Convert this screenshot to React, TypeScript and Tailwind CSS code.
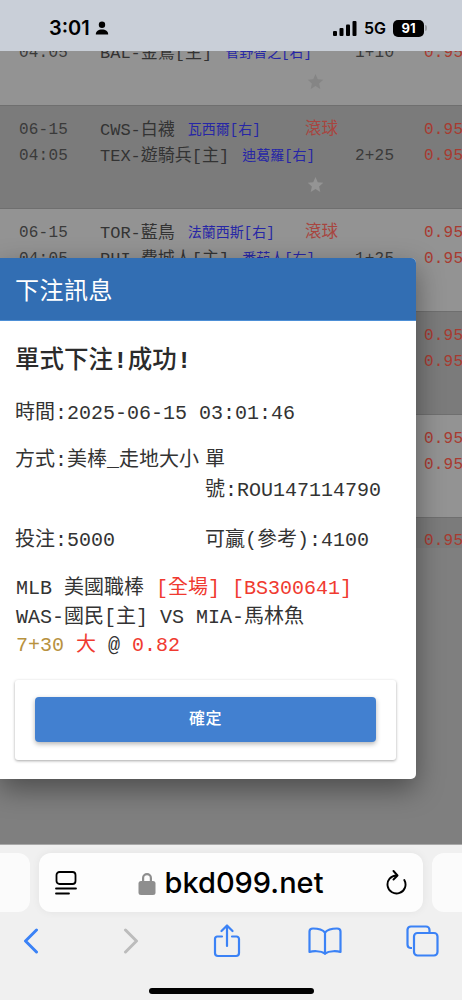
import React from 'react';

const mono = 'font-["Liberation_Mono","Noto_Sans_CJK_TC",monospace]';

interface Game {
  date?: string;
  time?: string;
  home?: string;
  homePitcher?: string;
  away?: string;
  awayPitcher?: string;
  line?: string;
  live?: boolean;
  dark: boolean;
}

const games: Game[] = [
  { date: '06-15', time: '04:05', away: 'NYY-洋基', awayPitcher: '史特勞德[右]', home: 'BAL-金鶯[主]', homePitcher: '菅野智之[右]', line: '1+10', dark: false },
  { date: '06-15', time: '04:05', away: 'CWS-白襪', awayPitcher: '瓦西爾[右]', home: 'TEX-遊騎兵[主]', homePitcher: '迪葛羅[右]', line: '2+25', live: true, dark: true },
  { date: '06-15', time: '04:05', away: 'TOR-藍鳥', awayPitcher: '法蘭西斯[右]', home: 'PHI-費城人[主]', homePitcher: '番茄人[右]', line: '1+25', live: true, dark: false },
  { dark: true },
  { dark: false },
];

function GameRow({ game }: { game: Game }) {
  return (
    <div
      className={`grid h-[103px] shrink-0 grid-cols-[81px_205px_119px_1fr] border-b border-[#6f6f6f] pl-[19px] pt-[12px] whitespace-nowrap ${mono} ${
        game.dark ? 'bg-[#7b7b7b]' : 'bg-[#939393]'
      }`}
    >
      <div className="text-[16px] leading-[25.5px] tracking-[0.2px] text-[#3a3a3a]">
        <div className="h-[25.5px]">{game.date}</div>
        <div className="h-[25.5px]">{game.time}</div>
      </div>
      <div className="text-[17px] leading-[25.5px] text-[#333333]">
        <div className="flex h-[25.5px] items-center gap-[13px]">
          <span>{game.away}</span>
          <span className="text-[14px] text-[#2626a6]">{game.awayPitcher}</span>
        </div>
        <div className="flex h-[25.5px] items-center gap-[13px]">
          <span>{game.home}</span>
          <span className="text-[14px] text-[#2626a6]">{game.homePitcher}</span>
        </div>
      </div>
      <div>
        <div className="h-[25.5px] text-[16.5px] leading-[24px] text-[#a8453f]">{game.live ? '滾球' : ''}</div>
        <div className="h-[25.5px] pl-[50px] text-[16px] leading-[25.5px] tracking-[0.2px] text-[#3a3a3a]">{game.line}</div>
        {game.date && (
          <svg className="mt-[7px] ml-[2px] h-[17px] w-[17px]" viewBox="0 0 24 24" fill={game.dark ? '#949494' : '#858585'}>
            <path d="M12 1.5l3.2 7.2 7.8.8-5.9 5.2 1.7 7.8L12 18.5l-6.8 4 1.7-7.8L1 9.5l7.8-.8z" />
          </svg>
        )}
      </div>
      <div className="overflow-hidden text-[16px] leading-[25.5px] tracking-[0.2px] text-[#a83a30]">
        <div className="h-[25.5px]">0.95</div>
        <div className="h-[25.5px]">0.95</div>
      </div>
    </div>
  );
}

function StatusBar() {
  return (
    <div className="relative z-10 flex h-[51px] shrink-0 items-start justify-between bg-[#c9cfd8] pl-[49px] pr-[35px] pt-[16px] text-black">
      <div className="flex items-center gap-[5px]">
        <span className='font-["Inter",sans-serif] text-[20px] font-semibold leading-[24px]'>3:01</span>
        <svg className="h-[14px] w-[14px]" viewBox="0 0 14 14" fill="#000">
          <circle cx="7" cy="3.8" r="3.2" />
          <path d="M0.8 13.5c0-3.4 2.6-5 6.2-5s6.2 1.6 6.2 5z" />
        </svg>
      </div>
      <div className="flex items-center gap-[7px] pt-[3px]">
        <svg className="h-[15px] w-[24px]" viewBox="0 0 24 15" fill="#000">
          <rect x="0" y="10" width="4" height="5" rx="1" />
          <rect x="6.5" y="7" width="4" height="8" rx="1" />
          <rect x="13" y="3.5" width="4" height="11.5" rx="1" />
          <rect x="19.5" y="0" width="4" height="15" rx="1" />
        </svg>
        <span className='font-["Inter",sans-serif] text-[16px] font-semibold leading-[18px]'>5G</span>
        <div className="flex items-center">
          <div className='flex h-[17px] w-[31px] items-center justify-center rounded-[5px] bg-black font-["Inter",sans-serif] text-[13px] font-bold leading-none text-white'>
            91
          </div>
          <div className="ml-[1px] h-[6px] w-[2px] rounded-r-[2px] bg-[#9a9da2]" />
        </div>
      </div>
    </div>
  );
}

function BetModal() {
  return (
    <div className="absolute left-0 top-[258px] z-20 w-[416px] overflow-hidden rounded-r-[5px] bg-white shadow-[0_10px_28px_rgba(0,0,0,0.4)]">
      <div className='h-[63px] border-b border-[#4d8fd6] bg-[#326eb3] pl-[15px] font-["Noto_Sans_CJK_TC",sans-serif] text-[24px] leading-[62px] tracking-[0.5px] text-white'>
        下注訊息
      </div>
      <div className={`px-[16px] pb-[19px] text-[20px] text-[#333333] ${mono}`}>
        <div className="-ml-[1px] pt-[23px] text-[24.5px] font-medium leading-[36px] text-[#2b2b2b]">
          單式下注<b>!</b>成功<b>!</b>
        </div>
        <div className="mt-[22px] -ml-[1px] leading-[24px]">時間:2025-06-15 03:01:46</div>
        <div className="mt-[20px] -ml-[1px] grid grid-cols-[190px_190px] leading-[30px]">
          <div>方式:美棒_走地大小</div>
          <div>單號:ROU147114790</div>
        </div>
        <div className="mt-[20px] -ml-[1px] grid grid-cols-[190px_190px] leading-[30px]">
          <div>投注:5000</div>
          <div className="whitespace-nowrap">可贏(參考):4100</div>
        </div>
        <div className="mt-[19px] leading-[28.5px]">
          <div>
            MLB 美國職棒 <span className="text-[#f03a30]">[全場] [BS300641]</span>
          </div>
          <div>WAS-國民[主] VS MIA-馬林魚</div>
          <div>
            <span className="text-[#b8923f]">7+30</span> <span className="text-[#f03a30]">大</span> @{' '}
            <span className="text-[#f03a30]">0.82</span>
          </div>
        </div>
        <div className="mt-[19px] -ml-[1px] w-[381px] rounded-[3px] bg-white px-[20px] pb-[18px] pt-[17px] shadow-[0_1px_3px_rgba(0,0,0,0.35)]">
          <button className='block h-[45px] w-[341px] rounded-[4px] bg-[#4280d0] pb-[4px] font-["Noto_Sans_CJK_TC",sans-serif] text-[16px] font-medium tracking-[0.5px] text-white shadow-[0_2px_5px_rgba(0,0,0,0.3)]'>
            確定
          </button>
        </div>
      </div>
    </div>
  );
}

function SafariBar() {
  const blue = '#3b82f6';
  return (
    <div className="flex h-[156px] shrink-0 flex-col border-t border-[#a9a9a9] bg-[#f0f0f0]">
      <div className="mt-[8px] flex h-[59px] shrink-0 gap-[9px]">
        <div className="-ml-[30px] w-[60px] shrink-0 rounded-[12px] bg-[#fbfbfb]" />
        <div className="flex w-[384px] shrink-0 items-center rounded-[12px] bg-[#fdfdfd] px-[16px] shadow-[0_0_8px_rgba(0,0,0,0.06)]">
          <svg className="h-[24px] w-[22px]" viewBox="0 0 22 24" fill="none" stroke="#000" strokeWidth="1.8" strokeLinecap="round">
            <rect x="1.5" y="1" width="19" height="12" rx="3" />
            <path d="M1 17.5h20M1 22.5h13" />
          </svg>
          <div className="flex flex-1 items-center justify-center gap-[8px] pr-[1px]">
            <svg className="h-[24px] w-[18px]" viewBox="0 0 18 24" fill="#8e8e8e">
              <path d="M4 11V7a5 5 0 0 1 10 0v4h-2.2V7a2.8 2.8 0 0 0-5.6 0v4z" />
              <rect x="0.5" y="10" width="17" height="14" rx="2.5" />
            </svg>
            <span className='font-["Inter",sans-serif] text-[29px] font-medium leading-[34px] text-black'>bkd099.net</span>
          </div>
          <svg className="h-[25px] w-[21px]" viewBox="0 0 21 25" fill="none" stroke="#000" strokeWidth="1.9" strokeLinecap="round" strokeLinejoin="round">
            <path d="M10.5 5.5A9 9 0 1 0 18.3 10" />
            <path d="M7.5 1l4 4.500-4 4" />
          </svg>
        </div>
        <div className="w-[60px] shrink-0 rounded-[12px] bg-[#fbfbfb]" />
      </div>
      <div className="relative mt-[7px] flex h-[44px] shrink-0 items-center">
        <svg className="ml-[23px] h-[26px] w-[16px]" viewBox="0 0 16 26" fill="none" stroke={blue} strokeWidth="3" strokeLinecap="round" strokeLinejoin="round">
          <path d="M13.500 2L2.500 13l11 11" />
        </svg>
        <svg className="ml-[84px] h-[26px] w-[16px]" viewBox="0 0 16 26" fill="none" stroke="#bcbcbc" strokeWidth="3" strokeLinecap="round" strokeLinejoin="round">
          <path d="M2.500 2l11 11-11 11" />
        </svg>
        <svg className="ml-[74px] h-[34px] w-[28px]" viewBox="0 0 28 34" fill="none" stroke={blue} strokeWidth="2.2" strokeLinecap="round" strokeLinejoin="round">
          <path d="M9 12.500H4a2.500 2.500 0 0 0-2 2.500v14a3 3 0 0 0 3 3h18a3 3 0 0 0 3-3V15a2.500 2.500 0 0 0-2.500-2.500H19" />
          <path d="M14 22V2M8.500 7L14 1.500 19.500 7" />
        </svg>
        <svg className="ml-[67px] h-[28px] w-[34px]" viewBox="0 0 34 28" fill="none" stroke={blue} strokeWidth="2.2" strokeLinecap="round" strokeLinejoin="round">
          <path d="M17 5.500C14.500 2.500 10 1.500 5 1.500c-2 0-3.500 1-3.500 3V25c3-1 11-1.500 15.500 1.500V5.500z" />
          <path d="M17 5.500c2.500-3 7-4 12-4 2 0 3.500 1 3.500 3V25c-3-1-11-1.500-15.500 1.500" />
        </svg>
        <svg className="ml-[64px] h-[32px] w-[33px]" viewBox="0 0 33 32" fill="none" stroke={blue} strokeWidth="2.2" strokeLinejoin="round">
          <path d="M6 23H4.500A3.500 3.500 0 0 1 1.500 19.500V4.500A3.500 3.500 0 0 1 5 1.500h15A3.500 3.500 0 0 1 23.500 5v2" />
          <rect x="8" y="8" width="23.500" height="22.500" rx="3.500" />
        </svg>
      </div>
      <div className="mx-auto mt-[25px] h-[6px] w-[165px] rounded-full bg-black" />
    </div>
  );
}

export default function App() {
  return (
    <div className="relative flex h-[1000px] w-[462px] flex-col overflow-hidden bg-[#7f7f7f]">
      <StatusBar />
      <div className="flex min-h-0 flex-1 flex-col overflow-hidden">
        <div className="-mt-[48px] flex flex-col">
          {games.map((game, i) => (
            <GameRow key={i} game={game} />
          ))}
          <div className={`flex h-[30px] justify-end bg-[#7b7b7b] text-[16px] leading-[46px] tracking-[0.2px] text-[#a83a30] ${mono}`}>
            <span className="w-[38px] overflow-hidden whitespace-nowrap">0.95</span>
          </div>
        </div>
      </div>
      <BetModal />
      <SafariBar />
    </div>
  );
}
